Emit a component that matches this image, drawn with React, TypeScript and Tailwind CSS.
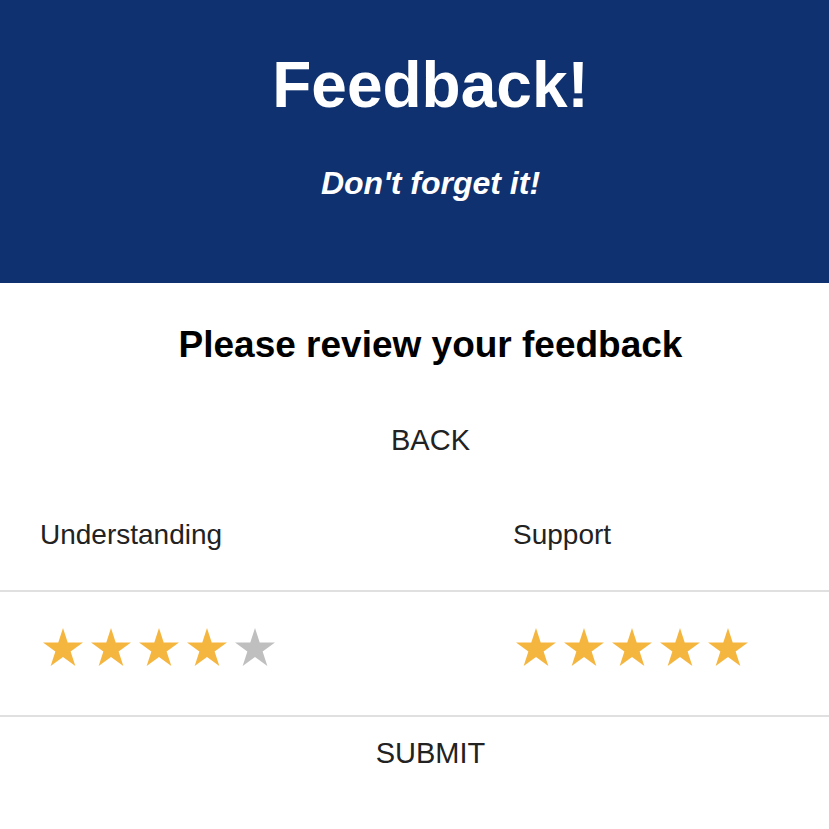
import React from "react";

const Star = ({ filled }: { filled: boolean }) => (
  <svg width="40" height="38" viewBox="0 0 40 38" className="block">
    <polygon
      points="20,0 24.71,14.51 39.97,14.51 27.63,23.48 32.34,37.99 20,29.02 7.66,37.99 12.37,23.48 0.03,14.51 15.29,14.51"
      fill={filled ? "#f5b640" : "#bfbfbf"}
    />
  </svg>
);

const Stars = ({ value }: { value: number }) => (
  <div className="flex gap-[8px]">
    {[1, 2, 3, 4, 5].map((i) => (
      <Star key={i} filled={i <= value} />
    ))}
  </div>
);

export default function App() {
  return (
    <div className="w-full min-h-[829px] bg-white font-['Liberation_Sans',Arial,sans-serif] text-[#222222]">
      <header className="bg-[#0f316f] h-[283px] pt-[53px] pl-[32px] text-center text-white">
        <h1 className="text-[64px] leading-[64px] font-bold">Feedback!</h1>
        <h2 className="mt-[50px] text-[32px] leading-[32px] font-bold italic">Don't forget it!</h2>
      </header>
      <h3 className="mt-[43px] pl-[32px] text-center text-[37px] leading-[37px] font-bold text-black">
        Please review your feedback
      </h3>
      <div className="pl-[32px]">
        <button className="mt-[63px] block mx-auto text-[29px] leading-[29px] text-[#222222]">BACK</button>
      </div>
      <div className="mt-[66px] grid grid-cols-[473px_1fr]">
        <div className="pl-[40px] pb-[41px] text-[28px] leading-[28px]">Understanding</div>
        <div className="pl-[40px] pb-[41px] text-[28px] leading-[28px]">Support</div>
      </div>
      <div className="h-[2px] bg-[#e0e0e0]" />
      <div className="grid grid-cols-[473px_1fr] pt-[36px] pb-[49px]">
        <div className="pl-[43px]">
          <Stars value={4} />
        </div>
        <div className="pl-[43px]">
          <Stars value={5} />
        </div>
      </div>
      <div className="h-[2px] bg-[#e0e0e0]" />
      <div className="pl-[32px]">
        <button className="mt-[22px] block mx-auto text-[29px] leading-[29px] text-[#222222]">SUBMIT</button>
      </div>
    </div>
  );
}
